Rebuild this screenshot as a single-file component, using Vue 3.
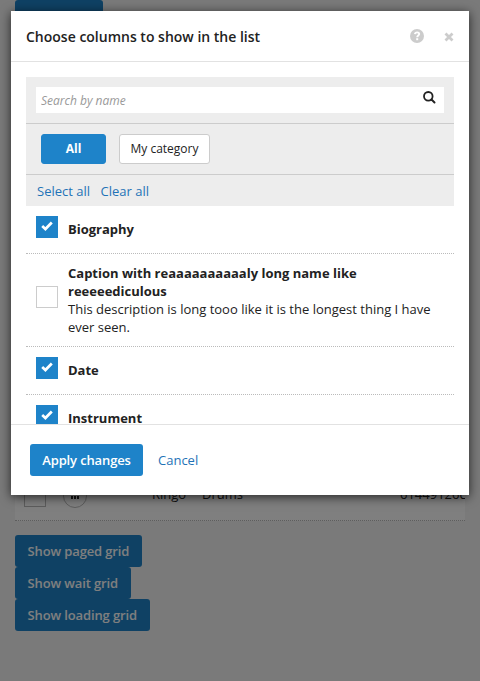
<script setup>
import { ref } from 'vue'

const search = ref('')
const categories = ['All', 'My category']
const active = ref('All')
const columns = ref([
  { name: 'Biography', shown: true },
  {
    name: 'Caption with reaaaaaaaaaaly long name like reeeeediculous',
    description: 'This description is long tooo like it is the longest thing I have ever seen.',
    shown: false,
  },
  { name: 'Date', shown: true },
  { name: 'Instrument', shown: true },
])
const setAll = (value) => columns.value.forEach((c) => (c.shown = value))
</script>

<template>
  <div class="page">
    <main class="content">
      <button class="btn open">Show grid</button>
      <div class="grid-row">
        <span class="box"></span>
        <span class="more"><i></i><i></i><i></i></span>
        <span class="first">Ringo</span>
        <span class="instrument">Drums</span>
        <span class="code">61449126c</span>
      </div>
      <button class="btn">Show paged grid</button>
      <button class="btn">Show wait grid</button>
      <button class="btn">Show loading grid</button>
    </main>

    <div class="backdrop">
      <section class="modal">
        <header class="head">
          <h1>Choose columns to show in the list</h1>
          <svg class="help" width="14" height="14" viewBox="0 0 14 14">
            <circle cx="7" cy="7" r="7" fill="#ccc" />
            <path d="M4.900 5.200C5.100 3.900 6 3.400 7.100 3.400c1.200 0 2.100.7 2.100 1.700C9.200 6.500 7.200 6.500 7.200 8.200" fill="none" stroke="#fff" stroke-width="1.900" />
            <rect x="6.200" y="9.200" width="2" height="2" fill="#fff" />
          </svg>
          <svg class="close" width="10" height="10" viewBox="0 0 10 10">
            <path d="M1.500 1.500L8.500 8.500M8.500 1.500L1.500 8.500" stroke="#ccc" stroke-width="2.800" />
          </svg>
        </header>

        <div class="body">
          <div class="filters">
            <div class="search">
              <input v-model="search" placeholder="Search by name" />
              <svg width="13" height="13" viewBox="0 0 13 13">
                <circle cx="5.300" cy="5.300" r="4.300" fill="none" stroke="#222" stroke-width="1.800" />
                <path d="M8.500 8.500L11.500 11.500" stroke="#222" stroke-width="2" stroke-linecap="round" />
              </svg>
            </div>
            <div class="tabs">
              <button
                v-for="c in categories"
                :key="c"
                :class="['tab', { active: c === active }]"
                @click="active = c"
              >{{ c }}</button>
            </div>
            <div class="links">
              <a @click="setAll(true)">Select all</a>
              <a @click="setAll(false)">Clear all</a>
            </div>
          </div>

          <ul class="list">
            <li v-for="c in columns" :key="c.name" @click="c.shown = !c.shown">
              <span :class="['check', { on: c.shown }]">
                <svg v-if="c.shown" width="12" height="10" viewBox="0 0 12 10">
                  <path d="M1.200 5L4.400 8L10.800 1.500" fill="none" stroke="#fff" stroke-width="2.700" />
                </svg>
              </span>
              <div class="label">
                <strong>{{ c.name }}</strong>
                <p v-if="c.description">{{ c.description }}</p>
              </div>
            </li>
          </ul>
        </div>

        <footer class="foot">
          <button class="btn apply">Apply changes</button>
          <a>Cancel</a>
        </footer>
      </section>
    </div>
  </div>
</template>

<style>
body {
  overflow: hidden;
}
</style>

<style scoped>
* {
  box-sizing: border-box;
}
.page {
  position: relative;
  width: 480px;
  height: 681px;
  overflow: hidden;
  background: #f4f4f4;
  color: #222;
  font: 13px/18px "Open Sans", sans-serif;
}
button,
input {
  font: inherit;
}
.content {
  display: flex;
  flex-direction: column;
  align-items: flex-start;
  padding: 0 15px;
}
.btn {
  height: 32px;
  padding: 0 12.600px;
  border: 0;
  border-radius: 3px;
  background: #1e83c9;
  color: #fff;
  font-weight: 600;
  letter-spacing: -0.130px;
  white-space: nowrap;
}
.open {
  width: 88px;
}
.apply {
  width: 113px;
  padding: 0;
}
.grid-row {
  display: flex;
  align-items: center;
  width: 450px;
  height: 49px;
  margin: 440px 0 14px;
  padding-left: 9px;
  overflow: hidden;
  background: #fff;
  border-bottom: 1px dotted #bbb;
}
.grid-row > span:not(.box, .more) {
  padding-bottom: 4px;
}
.box {
  flex: none;
  width: 22px;
  height: 22px;
  border: 1px solid #bbb;
}
.more {
  display: flex;
  flex: none;
  justify-content: center;
  align-items: center;
  gap: 1px;
  width: 24px;
  height: 24px;
  margin-left: 17px;
  padding-top: 2px;
  border: 1px solid #bbb;
  border-radius: 50%;
}
.more i {
  width: 2px;
  height: 3px;
  background: #222;
}
.first {
  flex: none;
  width: 50px;
  margin-left: 65px;
}
.instrument {
  flex: none;
  width: 198px;
}
.backdrop {
  position: absolute;
  inset: 0;
  padding: 11px;
  background: rgba(0, 0, 0, 0.5);
}
.modal {
  display: flex;
  flex-direction: column;
  width: 458px;
  height: 484px;
  background: #fff;
  box-shadow: 0 2px 10px rgba(0, 0, 0, 0.7);
}
.head {
  display: flex;
  flex: none;
  align-items: center;
  height: 51px;
  padding: 1px 15px 0;
  border-bottom: 1px solid #e2e2e2;
}
.head h1 {
  flex: 1;
  margin: 0;
  font-size: 14px;
  font-weight: 600;
}
.help {
  margin-top: -1px;
}
.close {
  margin-left: 20px;
}
.body {
  flex: 1;
  min-height: 0;
  padding: 15px 15px 0;
  overflow: hidden;
}
.filters {
  height: 129px;
  background: #ededed;
}
.search {
  position: relative;
  height: 47px;
  padding: 10px;
  border-bottom: 1px solid #ccc;
}
.search input {
  display: block;
  width: 100%;
  height: 26px;
  padding: 1px 5px 0;
  border: 0;
  outline: 0;
  background: #fff;
  font-size: 12px;
}
.search input::placeholder {
  color: #999;
  font-style: italic;
  opacity: 1;
}
.search svg {
  position: absolute;
  top: 14px;
  right: 18px;
}
.tabs {
  display: flex;
  gap: 13px;
  height: 51px;
  padding: 10px 15px;
  border-bottom: 1px solid #ccc;
}
.tab {
  height: 30px;
  padding: 0 10.500px 1px;
  border: 1px solid #ccc;
  border-radius: 3px;
  background: #fff;
  color: #222;
  font-size: 12px;
}
.tab.active {
  width: 65px;
  border-color: #1e83c9;
  background: #1e83c9;
  color: #fff;
  font-weight: 700;
}
a {
  color: #1f73b7;
}
.links {
  display: flex;
  gap: 10.500px;
  padding: 7px 11px;
}
.list {
  margin: 0;
  padding: 0;
  list-style: none;
}
.list li {
  display: flex;
  align-items: center;
  padding: 10px;
  border-bottom: 1px dotted #bbb;
}
.check {
  display: flex;
  flex: none;
  justify-content: center;
  align-items: center;
  width: 22px;
  height: 22px;
  margin: -0.200px 0 5.200px;
  padding-bottom: 2px;
  border: 1px solid #ccc;
}
.check.on {
  border-color: #1e83c9;
  background: #1e83c9;
}
.label {
  margin: -0.200px 0 0.200px 10px;
}
.label strong {
  display: block;
}
.label p {
  margin: 0;
}
.foot {
  display: flex;
  flex: none;
  align-items: center;
  gap: 15px;
  height: 71px;
  padding-left: 19px;
  border-top: 1px solid #e2e2e2;
}
</style>
